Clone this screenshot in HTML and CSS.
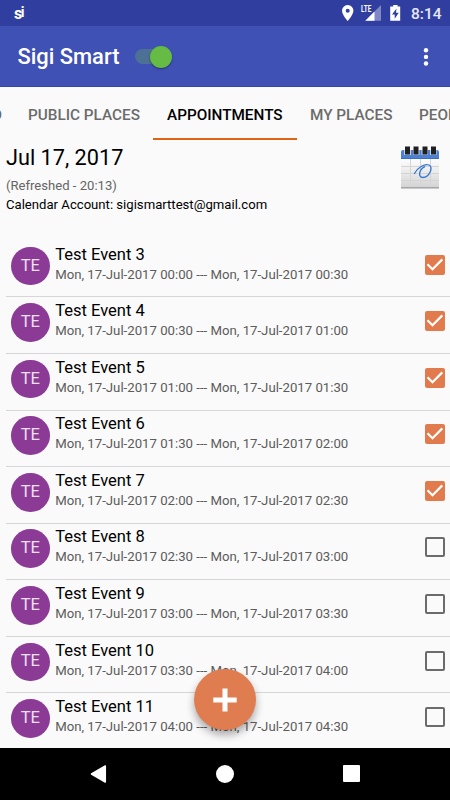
FILE: index.html
```html
<!DOCTYPE html>
<html lang="en">
<head>
<meta charset="utf-8">
<title>Sigi Smart</title>
<link rel="stylesheet" href="styles.css">
</head>
<body>
<div class="screen">
  <header class="status">
    <span class="logo"><b>s</b><b class="logo-i">i</b></span>
    <svg class="status-icons" width="62" height="20" viewBox="0 0 62 20">
      <path fill="#fff" fill-rule="evenodd" d="M5.700 0A5.600 5.600 0 0 0 0 5.700C0 9.800 5.700 16 5.700 16S11.400 9.800 11.400 5.700A5.600 5.600 0 0 0 5.700 0ZM5.700 3.700a2 2 0 1 1 0 4 2 2 0 0 1 0-4Z"/>
      <path fill="#7f88c4" d="M39 0V15.700H23.300Z"/>
      <path fill="#303f9f" d="M17 0H31V8H17Z"/>
      <path fill="#fff" d="M32.500 6.500V15.700H23.300Z"/>
      <text class="lte" x="19" y="7.300" textLength="10.300" lengthAdjust="spacingAndGlyphs">LTE</text>
      <path fill="#fff" d="M51.200 0h4.400v1.500h2.600V15.700H48.200V1.500h3Z"/>
      <path fill="#303f9f" d="M54.500 3.500L50 9.500h2.700v4.200L56.700 7.700h-2.700Z"/>
    </svg>
    <span class="clock">8:14</span>
  </header>
  <div class="appbar">
    <h1>Sigi Smart</h1>
    <span class="switch"><span class="thumb"></span></span>
    <svg class="more" width="6" height="20" viewBox="0 0 6 20" fill="#fff"><circle cx="3" cy="3.300" r="2.200"/><circle cx="3" cy="9.900" r="2.200"/><circle cx="3" cy="16.500" r="2.200"/></svg>
  </div>
  <nav class="tabs">
    <span class="tab tab-first">FEED</span>
    <span class="tab tab-public">PUBLIC PLACES</span>
    <span class="tab active">APPOINTMENTS</span>
    <span class="tab tab-my">MY PLACES</span>
    <span class="tab">PEOPLE</span>
  </nav>
  <section class="summary">
    <div>
      <h2>Jul 17, 2017</h2>
      <p class="refreshed">(Refreshed - 20:13)</p>
      <p class="account">Calendar Account: sigismarttest@gmail.com</p>
    </div>
    <svg class="calendar" width="40" height="44" viewBox="0 0 40 44">
      <defs><linearGradient id="paper" x1="0" y1="0" x2="0" y2="1"><stop offset="0" stop-color="#fff"/><stop offset="1" stop-color="#d2d2d2"/></linearGradient></defs>
      <path fill="url(#paper)" d="M1 12h38v30H1Z"/>
      <path stroke="#d4d4d4" d="M10.500 13v28M20.500 13v28M30.500 13v28M1 20.500h38M1 27.500h38M1 34.500h38"/>
      <path fill="#4c80d4" d="M1 13V6q0-2 2-2H37q2 0 2 2v7Z"/>
      <path fill="#3a6fc8" d="M1 12h38v1H1Z"/>
      <path fill="#999" d="M1 41.200h38v1.200H1Z"/>
      <path fill="#c9d0dc" d="M4 4h7v5H4ZM13 4h6.500v5H13ZM21.500 4h6.500v5h-6.500ZM30 4h6.500v5H30Z"/>
      <path fill="#202020" d="M5 0.500h5v8H5ZM13.500 0.500h5v8h-5ZM22.500 0.500h5v8h-5ZM31 0.500h5v8h-5Z"/>
      <path fill="none" stroke="#3476d4" stroke-width="1.300" stroke-linecap="round" d="M14.500 27.500C18 21 25 17.500 29 19C34 21 29 31.500 23 31.500C17.500 31.500 19 23.500 24.500 20.800"/>
    </svg>
  </section>
  <main class="events">
    <article class="event"><span class="avatar">TE</span><div class="info"><h3>Test Event 3</h3><p>Mon, 17-Jul-2017 00:00 --- Mon, 17-Jul-2017 00:30</p></div><span class="box checked"><svg width="20" height="20" viewBox="0 0 20 20"><path d="M2.500 9.200l5 5L17.300 4.400"/></svg></span></article>
    <article class="event"><span class="avatar">TE</span><div class="info"><h3>Test Event 4</h3><p>Mon, 17-Jul-2017 00:30 --- Mon, 17-Jul-2017 01:00</p></div><span class="box checked"><svg width="20" height="20" viewBox="0 0 20 20"><path d="M2.500 9.200l5 5L17.300 4.400"/></svg></span></article>
    <article class="event"><span class="avatar">TE</span><div class="info"><h3>Test Event 5</h3><p>Mon, 17-Jul-2017 01:00 --- Mon, 17-Jul-2017 01:30</p></div><span class="box checked"><svg width="20" height="20" viewBox="0 0 20 20"><path d="M2.500 9.200l5 5L17.300 4.400"/></svg></span></article>
    <article class="event"><span class="avatar">TE</span><div class="info"><h3>Test Event 6</h3><p>Mon, 17-Jul-2017 01:30 --- Mon, 17-Jul-2017 02:00</p></div><span class="box checked"><svg width="20" height="20" viewBox="0 0 20 20"><path d="M2.500 9.200l5 5L17.300 4.400"/></svg></span></article>
    <article class="event"><span class="avatar">TE</span><div class="info"><h3>Test Event 7</h3><p>Mon, 17-Jul-2017 02:00 --- Mon, 17-Jul-2017 02:30</p></div><span class="box checked"><svg width="20" height="20" viewBox="0 0 20 20"><path d="M2.500 9.200l5 5L17.300 4.400"/></svg></span></article>
    <article class="event"><span class="avatar">TE</span><div class="info"><h3>Test Event 8</h3><p>Mon, 17-Jul-2017 02:30 --- Mon, 17-Jul-2017 03:00</p></div><span class="box"></span></article>
    <article class="event"><span class="avatar">TE</span><div class="info"><h3>Test Event 9</h3><p>Mon, 17-Jul-2017 03:00 --- Mon, 17-Jul-2017 03:30</p></div><span class="box"></span></article>
    <article class="event"><span class="avatar">TE</span><div class="info"><h3>Test Event 10</h3><p>Mon, 17-Jul-2017 03:30 --- Mon, 17-Jul-2017 04:00</p></div><span class="box"></span></article>
    <article class="event"><span class="avatar">TE</span><div class="info"><h3>Test Event 11</h3><p>Mon, 17-Jul-2017 04:00 --- Mon, 17-Jul-2017 04:30</p></div><span class="box"></span></article>
  </main>
  <footer class="navbar">
    <svg width="17" height="20" viewBox="0 0 17 20"><path fill="#fff" stroke="#fff" stroke-width="1.500" stroke-linejoin="round" d="M15.300 2v16L1.500 10Z"/></svg>
    <span class="home"></span>
    <span class="recent"></span>
  </footer>
  <div class="fab"><svg width="24" height="24" viewBox="0 0 24 24"><path stroke="#fff" stroke-width="5" d="M12 0.500v23M0.300 12h23.400"/></svg></div>
</div>
</body>
</html>
```
FILE: styles.css
```css
* { box-sizing: border-box; }
body, h1, h2, h3, p { margin: 0; font-weight: 400; }
body { font-family: Roboto, sans-serif; background: #fafafa; color: #000; }
svg { display: block; flex: none; }
.screen { position: relative; width: 450px; height: 800px; overflow: hidden; display: flex; flex-direction: column; background: #fafafa; white-space: nowrap; }
.status { height: 26px; flex: none; background: #303f9f; color: #fff; display: flex; align-items: flex-start; padding: 5px 8px 0 14px; }
.logo { font-size: 16px; line-height: 14px; letter-spacing: -1.500px; }
.logo-i { font-size: 14px; vertical-align: 2px; }
.status-icons { margin-left: auto; margin-right: 7px; width: 62px; }
.lte { fill: #fff; font-size: 8.500px; font-weight: 700; }
.clock { font-size: 15.5px; font-weight: 500; line-height: 18px; width: 31px; color: #e6e8f5; }
.appbar { height: 61px; flex: none; background: #3f51b5; border-bottom: 1px solid #2f49b4; display: flex; align-items: center; padding: 0 21px 0 17.500px; color: #fff; }
.appbar h1 { font-size: 21.900px; font-weight: 500; width: 117.500px; line-height: 26px; padding-top: 2px; height: 28px; }
.switch { width: 37px; height: 15px; margin-top: 1px; border-radius: 8px; background: #4c7195; display: flex; align-items: center; justify-content: flex-end; }
.thumb { width: 22px; height: 22px; flex: none; border-radius: 50%; background: #66bb44; box-shadow: 0 1px 2px #0006; }
.more { margin-left: auto; margin-top: 1px; }
.tabs { height: 53px; flex: none; display: flex; margin-left: -52px; font-size: 15.3px; font-weight: 500; color: #6b6b6b; line-height: 56px; }
.tab { flex: none; }
.tab-first { width: 80px; padding-right: 26px; text-align: right; }
.tab-public { width: 125px; }
.active { width: 144px; padding-left: 14px; color: #000; border-bottom: 2px solid #e06416; }
.tab-my { width: 122px; padding-left: 13px; }
.summary { height: 100.900px; flex: none; display: flex; justify-content: space-between; padding: 3px 10px 0 6px; }
.summary h2 { font-size: 21.700px; line-height: 29px; }
.refreshed { font-size: 13.100px; line-height: 19px; margin-top: 4px; color: #656565; }
.account { font-size: 13.130px; line-height: 19px; }
.calendar { margin-top: 3px; }
.events { height: 507.100px; flex: none; overflow: hidden; padding-left: 6px; }
.event { height: 56.560px; border-bottom: 1px solid #d6d6d6; display: flex; align-items: flex-start; padding: 5.800px 5.500px 0 5px; }
.avatar { width: 38.700px; height: 38.700px; flex: none; border-radius: 50%; background: #8b3a96; color: #eee0f0; display: flex; align-items: center; justify-content: center; font-size: 16.500px; padding-bottom: 2px; }
.info { margin-left: 5.500px; margin-top: -2px; }
.info h3 { font-size: 16.500px; line-height: 20px; }
.info p { font-size: 13.200px; line-height: 19px; color: #5c5c5c; }
.box { width: 20px; height: 20px; flex: none; margin: 8px 0 0 auto; border: 2px solid #6b6b6b; border-radius: 2px; }
.box.checked { border: 0; background: #e17a4c; }
.box path { fill: none; stroke: #fff; stroke-width: 2.200; }
.navbar { height: 52px; flex: none; background: #000; display: flex; align-items: center; justify-content: space-between; padding: 0 90px; }
.home { width: 18px; height: 18px; border-radius: 50%; background: #fff; }
.recent { width: 17px; height: 17px; border-radius: 1px; background: #fff; }
.fab { position: absolute; left: 194px; top: 669px; width: 62px; height: 61px; border-radius: 50%; background: #df7c50; display: flex; align-items: center; justify-content: center; box-shadow: 0 5px 8px #0005; }
```
